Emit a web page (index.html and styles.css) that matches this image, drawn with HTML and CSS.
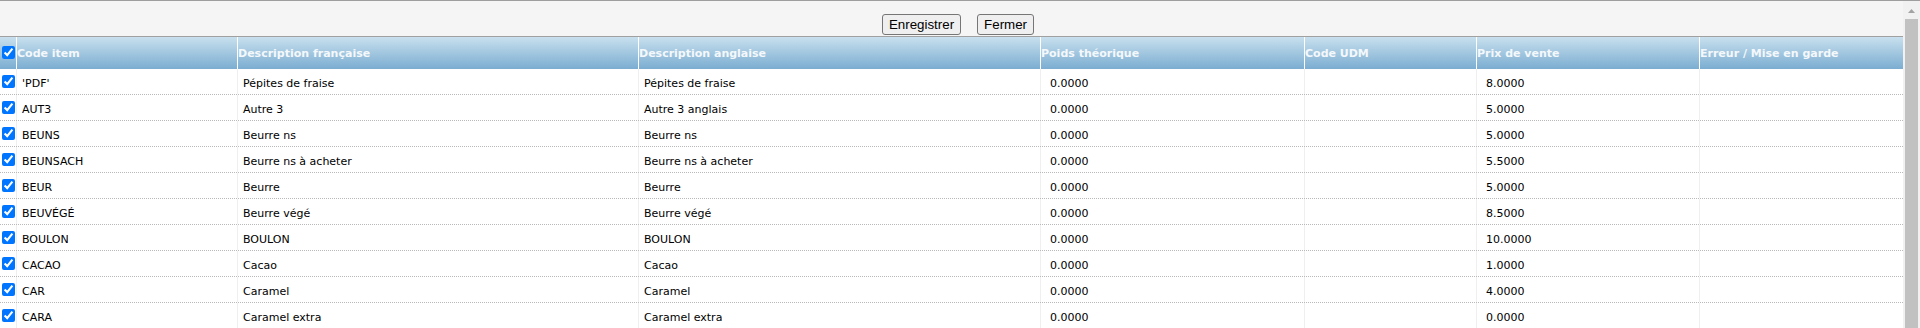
FILE: index.html
```html
<!DOCTYPE html>
<html lang="fr">
    <head>
        <meta charset="utf-8">
        <title>Importation des items</title>
        <link rel="stylesheet" href="styles.css">
    </head>
    <body>
        <div class="topline"></div>
        <div class="panel">
            <div class="content">
                <div class="toolbar">
                    <button>Enregistrer</button>
                    <button>Fermer</button>
                </div>
                <div class="grid">
                    <div class="row head">
                        <div class="cell chk"><input type="checkbox" checked></div>
                        <div class="cell">Code item</div>
                        <div class="cell">Description française</div>
                        <div class="cell">Description anglaise</div>
                        <div class="cell">Poids théorique</div>
                        <div class="cell">Code UDM</div>
                        <div class="cell">Prix de vente</div>
                        <div class="cell">Erreur / Mise en garde</div>
                    </div>
                    <div class="row">
                        <div class="cell chk"><input type="checkbox" checked></div>
                        <div class="cell">'PDF'</div>
                        <div class="cell">Pépites de fraise</div>
                        <div class="cell">Pépites de fraise</div>
                        <div class="cell num">0.0000</div>
                        <div class="cell"></div>
                        <div class="cell num">8.0000</div>
                        <div class="cell"></div>
                    </div>
                    <div class="row">
                        <div class="cell chk"><input type="checkbox" checked></div>
                        <div class="cell">AUT3</div>
                        <div class="cell">Autre 3</div>
                        <div class="cell">Autre 3 anglais</div>
                        <div class="cell num">0.0000</div>
                        <div class="cell"></div>
                        <div class="cell num">5.0000</div>
                        <div class="cell"></div>
                    </div>
                    <div class="row">
                        <div class="cell chk"><input type="checkbox" checked></div>
                        <div class="cell">BEUNS</div>
                        <div class="cell">Beurre ns</div>
                        <div class="cell">Beurre ns</div>
                        <div class="cell num">0.0000</div>
                        <div class="cell"></div>
                        <div class="cell num">5.0000</div>
                        <div class="cell"></div>
                    </div>
                    <div class="row">
                        <div class="cell chk"><input type="checkbox" checked></div>
                        <div class="cell">BEUNSACH</div>
                        <div class="cell">Beurre ns à acheter</div>
                        <div class="cell">Beurre ns à acheter</div>
                        <div class="cell num">0.0000</div>
                        <div class="cell"></div>
                        <div class="cell num">5.5000</div>
                        <div class="cell"></div>
                    </div>
                    <div class="row">
                        <div class="cell chk"><input type="checkbox" checked></div>
                        <div class="cell">BEUR</div>
                        <div class="cell">Beurre</div>
                        <div class="cell">Beurre</div>
                        <div class="cell num">0.0000</div>
                        <div class="cell"></div>
                        <div class="cell num">5.0000</div>
                        <div class="cell"></div>
                    </div>
                    <div class="row">
                        <div class="cell chk"><input type="checkbox" checked></div>
                        <div class="cell">BEUVÉGÉ</div>
                        <div class="cell">Beurre végé</div>
                        <div class="cell">Beurre végé</div>
                        <div class="cell num">0.0000</div>
                        <div class="cell"></div>
                        <div class="cell num">8.5000</div>
                        <div class="cell"></div>
                    </div>
                    <div class="row">
                        <div class="cell chk"><input type="checkbox" checked></div>
                        <div class="cell">BOULON</div>
                        <div class="cell">BOULON</div>
                        <div class="cell">BOULON</div>
                        <div class="cell num">0.0000</div>
                        <div class="cell"></div>
                        <div class="cell num">10.0000</div>
                        <div class="cell"></div>
                    </div>
                    <div class="row">
                        <div class="cell chk"><input type="checkbox" checked></div>
                        <div class="cell">CACAO</div>
                        <div class="cell">Cacao</div>
                        <div class="cell">Cacao</div>
                        <div class="cell num">0.0000</div>
                        <div class="cell"></div>
                        <div class="cell num">1.0000</div>
                        <div class="cell"></div>
                    </div>
                    <div class="row">
                        <div class="cell chk"><input type="checkbox" checked></div>
                        <div class="cell">CAR</div>
                        <div class="cell">Caramel</div>
                        <div class="cell">Caramel</div>
                        <div class="cell num">0.0000</div>
                        <div class="cell"></div>
                        <div class="cell num">4.0000</div>
                        <div class="cell"></div>
                    </div>
                    <div class="row">
                        <div class="cell chk"><input type="checkbox" checked></div>
                        <div class="cell">CARA</div>
                        <div class="cell">Caramel extra</div>
                        <div class="cell">Caramel extra</div>
                        <div class="cell num">0.0000</div>
                        <div class="cell"></div>
                        <div class="cell num">0.0000</div>
                        <div class="cell"></div>
                    </div>
                </div>
            </div>
            <div class="vscroll">
                <div class="arrow">
                    <svg width="7" height="4" viewBox="0 0 7 4"><path d="M3.5 0L7 4H0z" fill="#a3a3a3"/></svg>
                </div>
                <div class="thumb"></div>
            </div>
        </div>
    </body>
</html>
```

FILE: styles.css
```css
html {
    height: 100%;
    overflow: hidden;
    background-color: #fff;
}

body {
    margin: 0;
    font-family: "DejaVu Sans", Verdana, sans-serif;
    font-size: 11px;
    color: #000;
    overflow: hidden;
}

.topline {
    height: 1px;
    background-color: #9e9e9e;
}

.panel {
    height: 327px;
    display: flex;
    overflow: hidden;
    background-color: #fff;
}

.content {
    flex: 1;
    min-width: 0;
}

.vscroll {
    width: 17px;
    flex: none;
    display: flex;
    flex-direction: column;
    background-color: #f1f1f1;
}

.vscroll .arrow {
    height: 18px;
    flex: none;
    display: flex;
    justify-content: center;
    align-items: center;
    padding-top: 1px;
    box-sizing: border-box;
}

.vscroll .thumb {
    flex: 1;
    margin: 0 2px;
    background-color: #c1c1c1;
}

.toolbar {
    box-sizing: border-box;
    height: 35px;
    padding: 13px 0 0 13px;
    background-color: #f5f5f5;
    display: flex;
    justify-content: center;
    align-items: flex-start;
    gap: 16px;
}

button {
    font-family: "Liberation Sans", Arial, sans-serif;
    font-size: 13.33px;
    line-height: 15px;
    color: #000;
    background-color: #efefef;
    border: 1px solid #767676;
    border-radius: 3px;
    padding: 2px 6px;
    margin: 0;
}

.row {
    display: grid;
    grid-template-columns: 16px 221px 401px 402px 264px 172px 223px 1fr;
    box-sizing: border-box;
    height: 26px;
    border-bottom: 1px dotted #b9b9b9;
}

.cell {
    display: flex;
    align-items: center;
    padding: 3px 0 0 5px;
    border-left: 1px solid #efefef;
    white-space: nowrap;
    overflow: hidden;
}

.cell.chk {
    border-left: none;
    padding: 0 0 0 2px;
}

.cell.num {
    padding-left: 9px;
}

.head {
    height: 33px;
    border-top: 1px solid #a0a0a0;
    border-bottom: none;
    background: linear-gradient(#c8e0ee, #7badd1);
    color: #f4f8fb;
    font-weight: bold;
}

.head .cell {
    padding: 0;
    border-left-color: #fff;
}

.head .cell.chk {
    padding: 0 0 1px 2px;
}

input[type="checkbox"] {
    width: 13px;
    height: 13px;
    margin: 0;
}
```
